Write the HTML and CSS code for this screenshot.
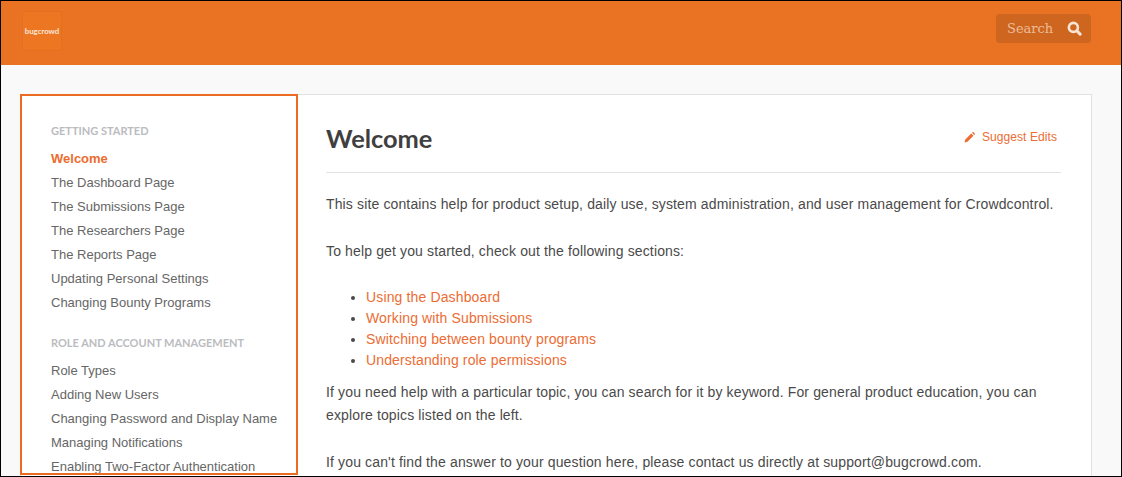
FILE: index.html
```html
<!DOCTYPE html>
<html lang="en">
<head>
<meta charset="utf-8">
<title>Welcome</title>
<link rel="stylesheet" href="styles.css">
</head>
<body>
<div class="frame">
  <header class="topbar">
    <a class="logo">bugcrowd</a>
    <div class="search">
      <span class="search-label">Search</span>
      <svg class="search-icon" viewBox="0 0 16 16" aria-hidden="true"><circle cx="6.8" cy="6.8" r="4.8" fill="none" stroke="currentColor" stroke-width="2.8"/><path d="M10.4 10.4 14 14" fill="none" stroke="currentColor" stroke-width="3.2" stroke-linecap="round"/></svg>
    </div>
  </header>
  <main class="page">
    <div class="card">
      <nav class="sidebar">
        <h4 class="nav-title">GETTING STARTED</h4>
        <ul class="nav-list">
          <li class="active">Welcome</li>
          <li>The Dashboard Page</li>
          <li>The Submissions Page</li>
          <li>The Researchers Page</li>
          <li>The Reports Page</li>
          <li>Updating Personal Settings</li>
          <li>Changing Bounty Programs</li>
        </ul>
        <h4 class="nav-title second">ROLE AND ACCOUNT MANAGEMENT</h4>
        <ul class="nav-list">
          <li>Role Types</li>
          <li>Adding New Users</li>
          <li>Changing Password and Display Name</li>
          <li>Managing Notifications</li>
          <li>Enabling Two-Factor Authentication</li>
        </ul>
      </nav>
      <article class="content">
        <div class="title-row">
          <h1>Welcome</h1>
          <a class="suggest"><svg class="pencil" viewBox="0 0 12 12" aria-hidden="true"><path d="M0.6 11.4 1.4 8.2 7.9 1.7 10.3 4.1 3.8 10.6Z M8.7 0.9 9.4 0.3C9.7 0 10.1 0 10.4 0.3L11.7 1.6C12 1.9 12 2.3 11.7 2.6L11.1 3.3Z" fill="currentColor"/></svg>Suggest Edits</a>
        </div>
        <p>This site contains help for product setup, daily use, system administration, and user management for Crowdcontrol.</p>
        <p>To help get you started, check out the following sections:</p>
        <ul class="links">
          <li><a>Using the Dashboard</a></li>
          <li><a>Working with Submissions</a></li>
          <li><a>Switching between bounty programs</a></li>
          <li><a>Understanding role permissions</a></li>
        </ul>
        <p>If you need help with a particular topic, you can search for it by keyword. For general product education, you can explore topics listed on the left.</p>
        <p>If you can't find the answer to your question here, please contact us directly at support@bugcrowd.com.</p>
      </article>
    </div>
  </main>
</div>
</body>
</html>
```
FILE: styles.css
```css
* { box-sizing: border-box; }
html, body { margin: 0; padding: 0; height: 100%; }
body { font-family: "Liberation Sans", Arial, sans-serif; color: #444; background: #f9f9f9; }
.frame { width: 1122px; height: 477px; border: 1px solid #000; overflow: hidden; background: #f9f9f9; }
.topbar { height: 64px; background: #e97322; display: flex; align-items: center; justify-content: space-between; padding: 0 30px 0 21px; }
.logo { width: 40px; height: 40px; margin-top: -5px; background: #ed7622; border: 1px solid #e56f20; display: flex; align-items: center; justify-content: center; color: #f8e6d8; font: 700 7.8px Lato, sans-serif; }
.search { width: 95px; height: 29px; margin-top: -10px; background: #cf661f; border-radius: 4px; display: flex; align-items: center; justify-content: space-between; padding: 0 9px 0 11px; color: #ebbc9a; }
.search-label { font: 13px "DejaVu Serif", "Liberation Serif", serif; }
.search-icon { width: 15px; height: 15px; color: #f8e4d4; }
.page { padding: 29px 29px 0 19px; height: 412px; }
.card { width: 1072px; height: 500px; background: #fff; border: 1px solid #e2e2e2; display: flex; align-items: flex-start; }
.sidebar { width: 278px; height: 381px; margin: -1px 0 0 -1px; border: 2px solid #ed6a23; padding: 28px 0 0 29px; overflow: hidden; flex: none; }
.nav-title { margin: 0 0 9px; font: 700 11px/14px Lato, sans-serif; color: #bbbcc0; }
.nav-title.second { margin-top: 21px; }
.nav-list { list-style: none; margin: 0; padding: 0; }
.nav-list li { font-size: 13px; line-height: 24px; color: #666; white-space: nowrap; }
.nav-list li.active { color: #ec6c2e; font-weight: 700; }
.content { flex: 1; padding: 0 30px 0 28px; font-size: 14px; letter-spacing: .137px; line-height: 23px; color: #4a4a4a; }
.title-row { height: 78px; border-bottom: 1px solid #e2e2e2; display: flex; justify-content: space-between; align-items: flex-start; margin-bottom: 20px; letter-spacing: 0; }
h1 { margin: 27px 0 0; font: 700 25.4px/32px Lato, sans-serif; color: #3f3f3f; }
.suggest { margin: 33px 4px 0 0; font-size: 12px; letter-spacing: .08px; line-height: 18px; color: #ec6c33; display: flex; align-items: center; gap: 7px; }
.pencil { width: 11px; height: 11px; }
.content p { margin: 0 0 24px; }
.links { margin: 0 0 10px; padding: 0 0 0 40px; line-height: 21px; }
.links a { color: #ec6c33; }
```
